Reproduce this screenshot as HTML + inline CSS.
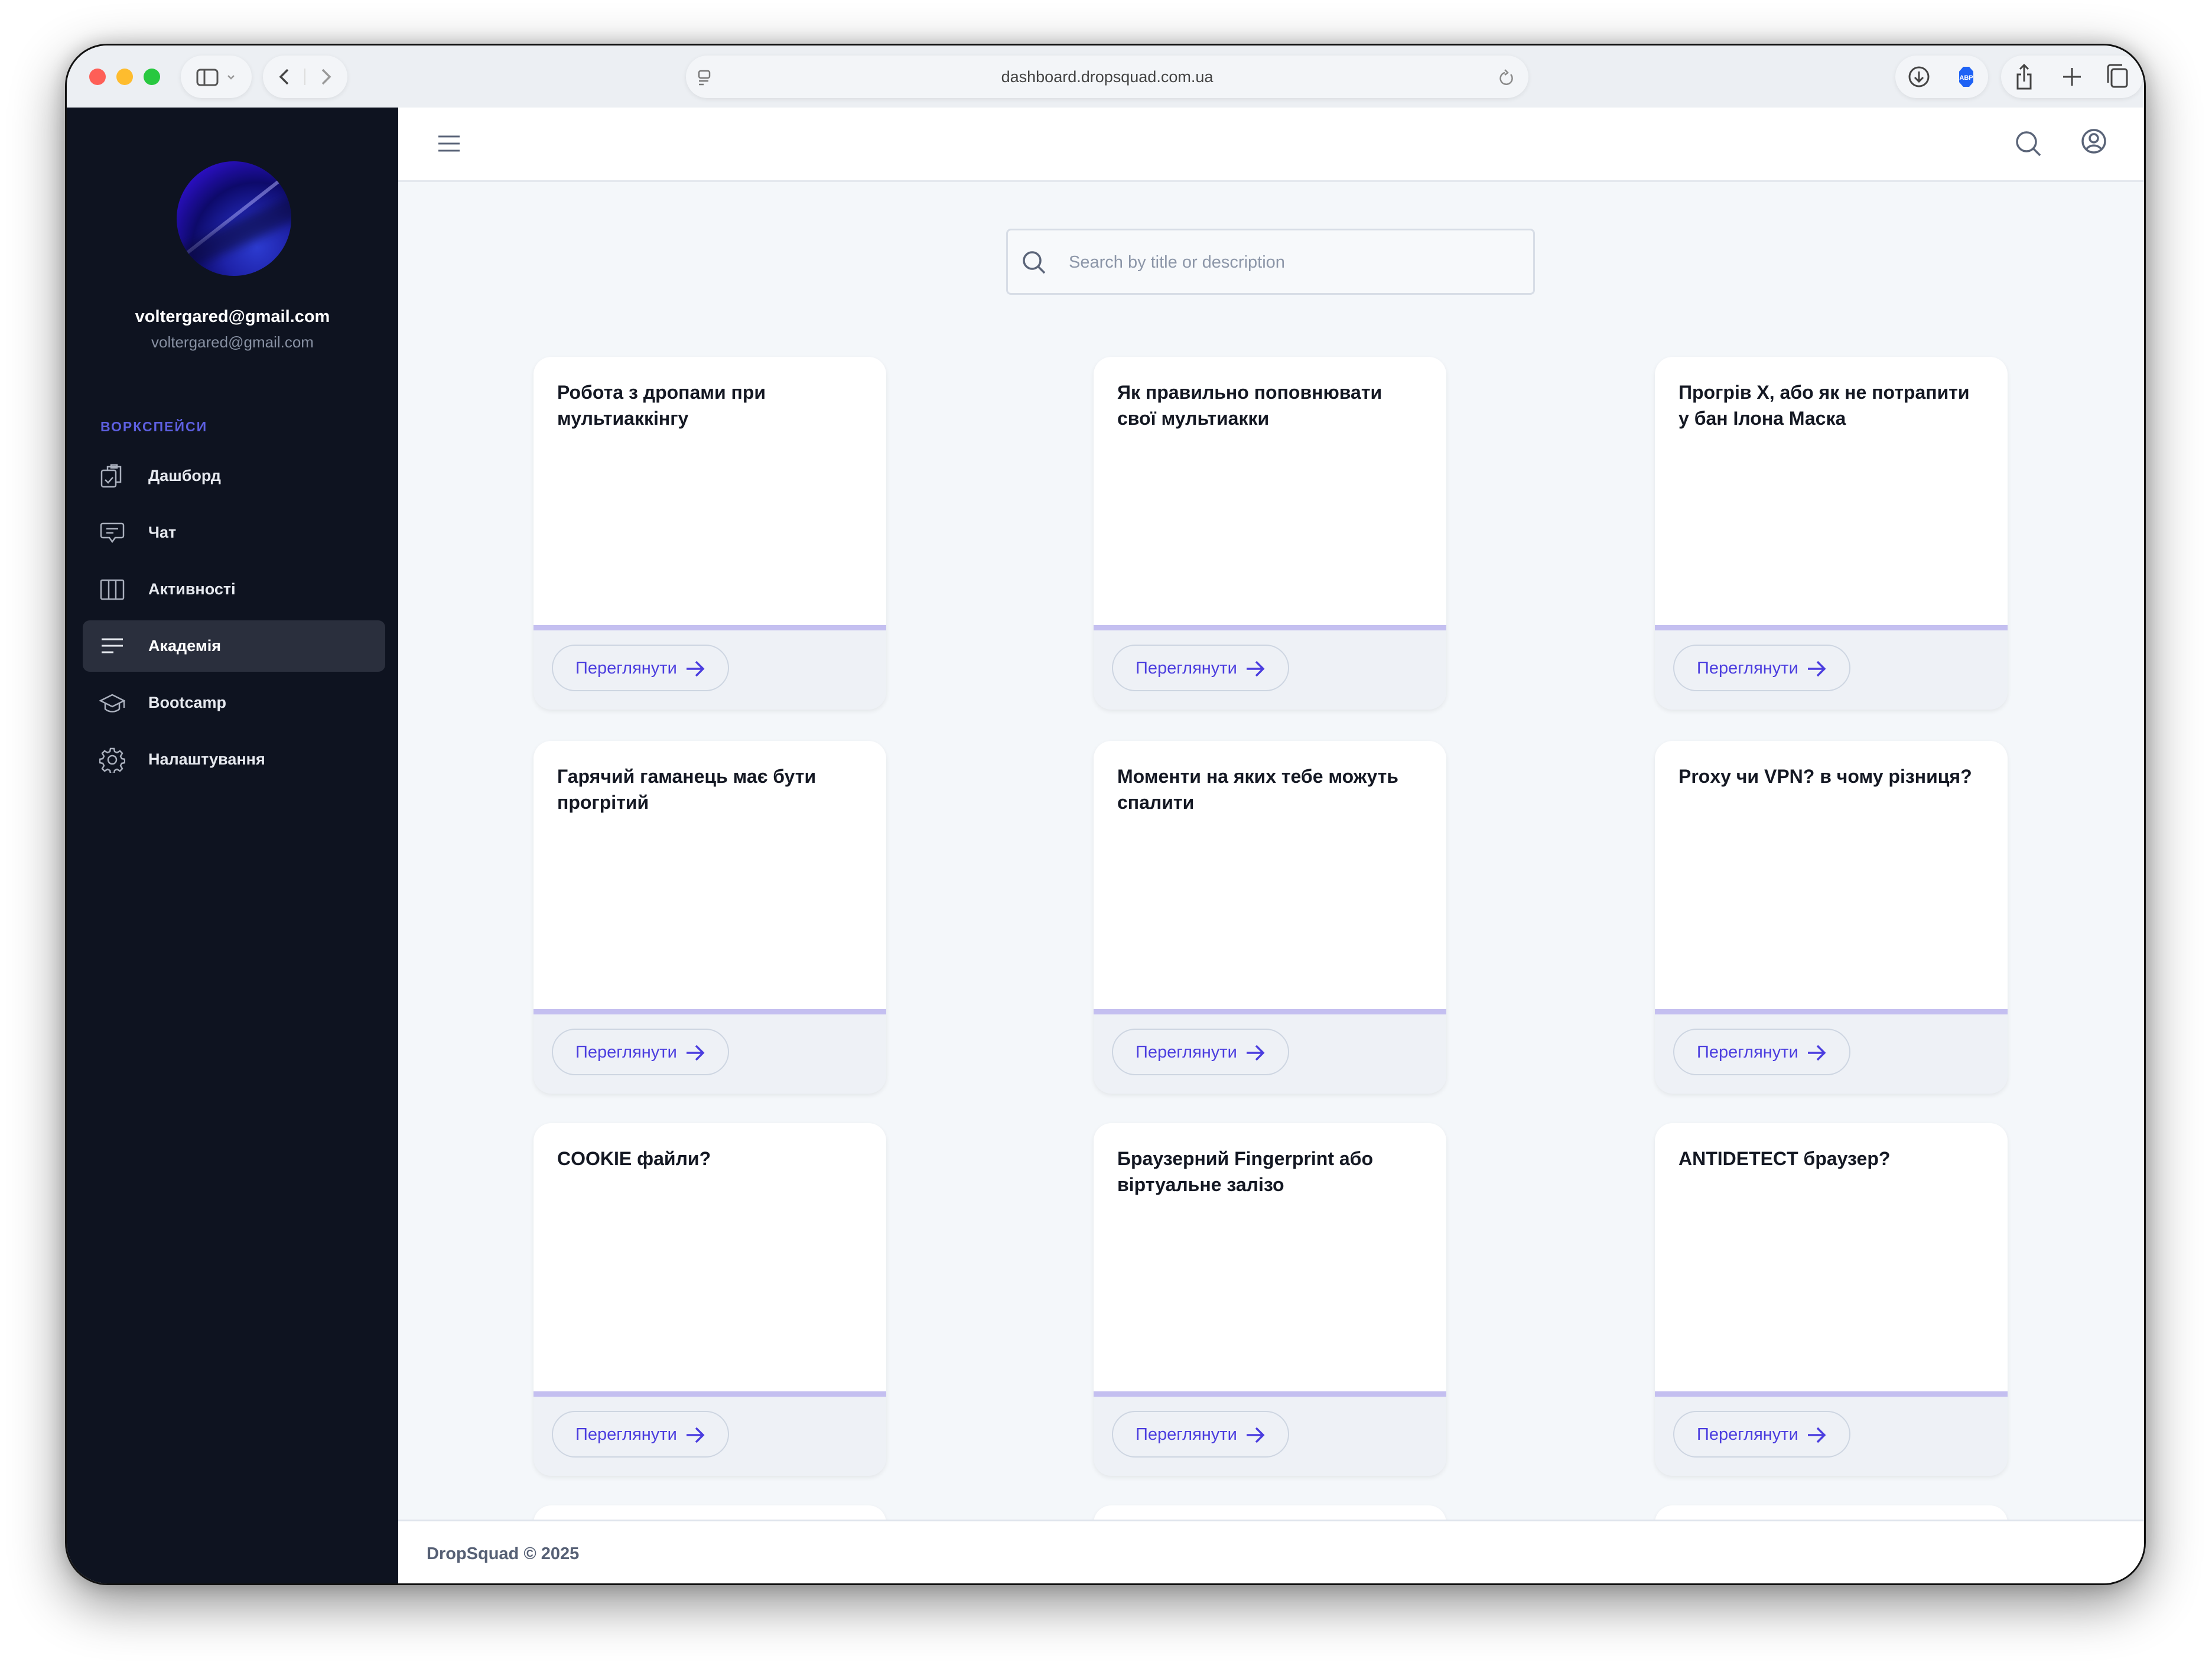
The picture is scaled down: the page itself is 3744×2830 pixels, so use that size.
<!DOCTYPE html>
<html><head><meta charset="utf-8"><style>
*{box-sizing:border-box;margin:0;padding:0}
html,body{width:3744px;height:2830px;overflow:hidden}
body{background:#fff;font-family:"Liberation Sans",sans-serif;position:relative}
.win{position:absolute;left:110px;top:74px;width:3522px;height:2609px;border-radius:72px;overflow:hidden;border:3px solid #111;box-shadow:0 30px 90px rgba(0,0,0,.45),0 0 30px rgba(0,0,0,.2);background:#f4f7fa}
.chrome{position:absolute;left:0;top:0;right:0;height:105px;background:#eceff3}
.tl{position:absolute;top:39px;width:28px;height:28px;border-radius:50%}
.pill{position:absolute;top:17px;height:72px;border-radius:36px;background:#f3f5f8;box-shadow:0 2px 8px rgba(0,0,0,.08)}
.side{position:absolute;left:0;top:105px;width:561px;bottom:0;background:#0e1320}
.main{position:absolute;left:561px;top:105px;right:0;bottom:0;overflow:hidden}
.top{position:absolute;left:0;right:0;top:0;height:126px;background:#fff;border-bottom:3px solid #e4e8ee}
.item{position:absolute;left:0;width:561px;height:86px;color:#e6e9ef;font-size:27px;font-weight:bold}
.item span{position:absolute;left:138px;top:28px}
.item svg{position:absolute;left:55px;top:22px}
.card{position:absolute;width:597px;height:597px;border-radius:30px;background:#eef1f6;box-shadow:0 3px 8px rgba(0,0,0,.07);overflow:hidden}
.card .w{position:absolute;left:0;top:0;right:0;height:463px;background:#fff;border-bottom:9px solid #c4bff0}
.card h3{position:absolute;left:40px;top:38px;right:40px;font-size:32px;line-height:44px;color:#141823;font-weight:bold}
.btn{position:absolute;left:31px;top:487px;width:300px;height:79px;border-radius:40px;border:2px solid #cdd5e1;color:#4b3ddf;font-size:29px}
.btn span{position:absolute;left:38px;top:22px}
.btn svg{position:absolute;left:224px;top:24px}
</style></head><body>
<div class="win">
 <div class="chrome">
  <div class="tl" style="left:38px;background:#fe5f57"></div>
  <div class="tl" style="left:84px;background:#febc2e"></div>
  <div class="tl" style="left:130px;background:#28c840"></div>
  <div class="pill" style="left:193px;width:120px"><svg width="120" height="72"><rect x="28" y="24" width="34" height="26" rx="5" fill="none" stroke="#555" stroke-width="3"/><line x1="40" y1="24" x2="40" y2="50" stroke="#555" stroke-width="3"/><path d="M80 34l5 5 5-5" fill="none" stroke="#999" stroke-width="2.5"/></svg></div>
  <div class="pill" style="left:332px;width:143px"><svg width="143" height="72"><path d="M42 24l-12 12 12 12" fill="none" stroke="#444" stroke-width="3.5"/><path d="M101 24l12 12-12 12" fill="none" stroke="#999" stroke-width="3.5"/><line x1="71" y1="22" x2="71" y2="50" stroke="#ddd" stroke-width="2"/></svg></div>
  <div class="pill" style="left:1048px;width:1426px;text-align:center;font-size:27px;color:#444;line-height:72px">dashboard.dropsquad.com.ua
   <svg style="position:absolute;left:18px;top:22px" width="30" height="30"><rect x="4" y="4" width="18" height="12" rx="3" fill="none" stroke="#777" stroke-width="2.5"/><line x1="4" y1="21" x2="20" y2="21" stroke="#777" stroke-width="2.5"/><line x1="4" y1="27" x2="12" y2="27" stroke="#777" stroke-width="2.5"/></svg>
   <svg style="position:absolute;right:22px;top:22px" width="30" height="30"><path d="M22 10a10 10 0 1 1-10-3" fill="none" stroke="#888" stroke-width="2.5"/><path d="M12 2l5 5-5 4" fill="none" stroke="#888" stroke-width="2.5"/></svg></div>
  <div class="pill" style="left:3095px;width:157px"><svg width="157" height="72"><circle cx="40" cy="36" r="16" fill="none" stroke="#444" stroke-width="3"/><path d="M40 27v17M33 37l7 7 7-7" fill="none" stroke="#444" stroke-width="3"/><polygon points="115,19 125,19 132,27 132,45 125,53 115,53 108,45 108,27" fill="#1e62f5"/><text x="120" y="41" font-size="11" fill="#fff" text-anchor="middle" font-weight="bold" font-family="Liberation Sans">ABP</text></svg></div>
  <div class="pill" style="left:3274px;width:240px"><svg width="240" height="72"><path d="M34 32h-6v24h22V32h-6M39 44V16M32 23l7-7 7 7" fill="none" stroke="#444" stroke-width="3"/><path d="M120 21v30M105 36h30" stroke="#444" stroke-width="3"/><rect x="187" y="23" width="26" height="30" rx="4" fill="none" stroke="#444" stroke-width="3"/><path d="M181 46V20a4 4 0 0 1 4-4h20" fill="none" stroke="#444" stroke-width="3"/></svg></div>
 </div>
 <div class="side">
  <div style="position:absolute;left:186px;top:91px;width:194px;height:194px;border-radius:50%;background:radial-gradient(circle at 70% 75%,#2c3bd0 0%,#1e22a8 30%,#0d0a6a 55%,#2a0fc0 80%,#3a1ae0 100%);overflow:hidden"><div style="position:absolute;left:-30px;top:80px;width:280px;height:6px;background:rgba(180,180,255,.5);transform:rotate(-38deg)"></div><div style="position:absolute;left:-20px;top:100px;width:260px;height:40px;background:rgba(10,10,60,.6);transform:rotate(-25deg);filter:blur(8px)"></div></div>
  <div style="position:absolute;left:0;width:561px;top:338px;text-align:center;color:#fff;font-weight:bold;font-size:29px">voltergared@gmail.com</div>
  <div style="position:absolute;left:0;width:561px;top:382px;text-align:center;color:#8891a3;font-size:26px">voltergared@gmail.com</div>
  <div style="position:absolute;left:57px;top:527px;color:#5d5fe0;font-weight:bold;font-size:23px;letter-spacing:2px">ВОРКСПЕЙСИ</div>
  <div class="item" style="top:580px"><svg width="44" height="44" fill="none" stroke="#aab0bd" stroke-width="2.5"><rect x="4" y="12" width="24" height="28" rx="3"/><path d="M14 12V6h22v26h-8M10 28l5 5 8-9"/><rect x="20" y="3" width="10" height="5"/></svg><span>Дашборд</span></div>
  <div class="item" style="top:676px"><svg width="44" height="44" fill="none" stroke="#aab0bd" stroke-width="2.5"><path d="M6 6h32a3 3 0 0 1 3 3v18a3 3 0 0 1-3 3H27l-5 7-5-7H6a3 3 0 0 1-3-3V9a3 3 0 0 1 3-3zM12 15h20M12 22h12"/></svg><span>Чат</span></div>
  <div class="item" style="top:772px"><svg width="44" height="44" fill="none" stroke="#aab0bd" stroke-width="2.5"><rect x="3" y="6" width="38" height="32" rx="2"/><path d="M16 6v32M28 6v32"/></svg><span>Активності</span></div>
  <div class="item" style="top:868px;left:27px;width:512px;height:87px;background:#2a2f3d;border-radius:12px;color:#fff"><svg width="44" height="44" style="left:28px" fill="none" stroke="#e6e9ef" stroke-width="3"><path d="M4 10h36M4 21h36M4 32h20"/></svg><span style="left:111px">Академія</span></div>
  <div class="item" style="top:964px"><svg width="44" height="44" fill="none" stroke="#aab0bd" stroke-width="2.5"><path d="M2 18l20-10 20 10-20 10zM10 22v10c6 6 18 6 24 0V22M42 18v12"/></svg><span>Bootcamp</span></div>
  <div class="item" style="top:1060px"><svg width="44" height="44" fill="none" stroke="#aab0bd" stroke-width="2.5"><circle cx="22" cy="22" r="7"/><path d="M19 3h6l1 5 4 2 5-3 4 4-3 5 2 4 5 1v6l-5 1-2 4 3 5-4 4-5-3-4 2-1 5h-6l-1-5-4-2-5 3-4-4 3-5-2-4-5-1v-6l5-1 2-4-3-5 4-4 5 3 4-2z"/></svg><span>Налаштування</span></div>
 </div>
 <div class="main">
  <div class="top">
   <svg style="position:absolute;left:66px;top:44px" width="40" height="34" stroke="#5a6478" stroke-width="3"><path d="M2 5h36M2 17h36M2 29h36"/></svg>
   <svg style="position:absolute;left:2734px;top:36px" width="52" height="52" fill="none" stroke="#5a6478" stroke-width="3.5"><circle cx="22" cy="22" r="16"/><path d="M33 33l12 12"/></svg>
   <svg style="position:absolute;left:2845px;top:32px" width="50" height="50" fill="none" stroke="#5a6478" stroke-width="3.5"><circle cx="25" cy="25" r="19"/><circle cx="25" cy="20" r="7"/><path d="M12 39c6-9 20-9 26 0"/></svg>
  </div>
  <div style="position:absolute;left:1029px;top:205px;width:895px;height:112px;border:3px solid #d7dde6;border-radius:8px;background:#f7f9fb">
   <svg style="position:absolute;left:22px;top:32px" width="46" height="46" fill="none" stroke="#5a6478" stroke-width="3.5"><circle cx="19" cy="19" r="14"/><path d="M29 29l11 11"/></svg>
   <span style="position:absolute;left:103px;top:38px;font-size:29px;color:#8c96a8">Search by title or description</span>
  </div>
  <div class="card" style="left:229px;top:422px"><div class="w"></div><h3>Робота з дропами при мультиаккінгу</h3><div class="btn"><span>Переглянути</span><svg width="34" height="30" fill="none" stroke="#4b3ddf" stroke-width="3.5"><path d="M2 15h28M18 3l12 12-12 12"/></svg></div></div>
  <div class="card" style="left:1177px;top:422px"><div class="w"></div><h3>Як правильно поповнювати свої мультиакки</h3><div class="btn"><span>Переглянути</span><svg width="34" height="30" fill="none" stroke="#4b3ddf" stroke-width="3.5"><path d="M2 15h28M18 3l12 12-12 12"/></svg></div></div>
  <div class="card" style="left:2127px;top:422px"><div class="w"></div><h3>Прогрів X, або як не потрапити у бан Ілона Маска</h3><div class="btn"><span>Переглянути</span><svg width="34" height="30" fill="none" stroke="#4b3ddf" stroke-width="3.5"><path d="M2 15h28M18 3l12 12-12 12"/></svg></div></div>
  <div class="card" style="left:229px;top:1072px"><div class="w"></div><h3>Гарячий гаманець має бути прогрітий</h3><div class="btn"><span>Переглянути</span><svg width="34" height="30" fill="none" stroke="#4b3ddf" stroke-width="3.5"><path d="M2 15h28M18 3l12 12-12 12"/></svg></div></div>
  <div class="card" style="left:1177px;top:1072px"><div class="w"></div><h3>Моменти на яких тебе можуть спалити</h3><div class="btn"><span>Переглянути</span><svg width="34" height="30" fill="none" stroke="#4b3ddf" stroke-width="3.5"><path d="M2 15h28M18 3l12 12-12 12"/></svg></div></div>
  <div class="card" style="left:2127px;top:1072px"><div class="w"></div><h3>Proxy чи VPN? в чому різниця?</h3><div class="btn"><span>Переглянути</span><svg width="34" height="30" fill="none" stroke="#4b3ddf" stroke-width="3.5"><path d="M2 15h28M18 3l12 12-12 12"/></svg></div></div>
  <div class="card" style="left:229px;top:1719px"><div class="w"></div><h3>COOKIE файли?</h3><div class="btn"><span>Переглянути</span><svg width="34" height="30" fill="none" stroke="#4b3ddf" stroke-width="3.5"><path d="M2 15h28M18 3l12 12-12 12"/></svg></div></div>
  <div class="card" style="left:1177px;top:1719px"><div class="w"></div><h3>Браузерний Fingerprint або віртуальне залізо</h3><div class="btn"><span>Переглянути</span><svg width="34" height="30" fill="none" stroke="#4b3ddf" stroke-width="3.5"><path d="M2 15h28M18 3l12 12-12 12"/></svg></div></div>
  <div class="card" style="left:2127px;top:1719px"><div class="w"></div><h3>ANTIDETECT браузер?</h3><div class="btn"><span>Переглянути</span><svg width="34" height="30" fill="none" stroke="#4b3ddf" stroke-width="3.5"><path d="M2 15h28M18 3l12 12-12 12"/></svg></div></div>
  <div class="card" style="left:229px;top:2366px;height:100px;background:#fff"></div>
  <div class="card" style="left:1177px;top:2366px;height:100px;background:#fff"></div>
  <div class="card" style="left:2127px;top:2366px;height:100px;background:#fff"></div>
  <div style="position:absolute;left:0;right:0;top:2390px;bottom:0;background:#fff;border-top:3px solid #dfe4ec">
   <span style="position:absolute;left:48px;top:39px;font-size:29px;color:#566075;font-weight:bold">DropSquad © 2025</span>
  </div>
 </div>
</div>
</body></html>
